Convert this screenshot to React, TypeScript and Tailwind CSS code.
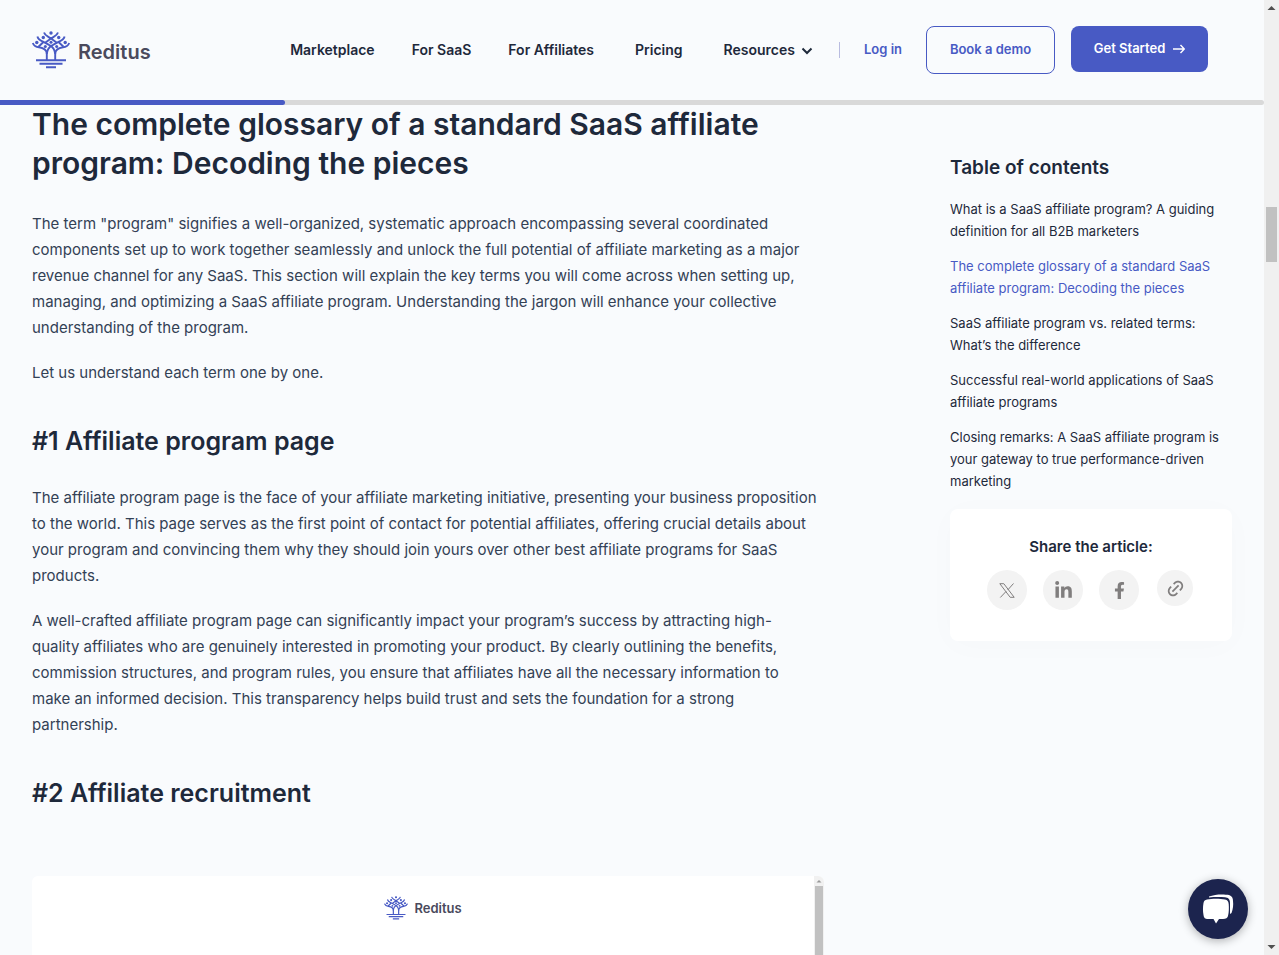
import type { ReactNode } from "react";
import { FaFacebookF, FaLinkedinIn } from "react-icons/fa";
import { RiLinkM } from "react-icons/ri";

function Tree({ className }: { className: string }) {
  return (
    <svg viewBox="0 0 38 38" className={className} fill="none" stroke="#485ac4" strokeWidth="1.9" aria-hidden="true">
      <path d="M.8 12C2 15.500 4 16 7 16.300C11 16.800 14.800 18.500 14.800 23V29" />
      <path d="M37.200 12C36 15.500 34 16 31 16.300C27 16.800 23.200 18.500 23.200 23V29" />
      <path d="M14.800 23C15 18 17.500 15.500 21 13.800L27 10.700C30 9.300 31.800 8.500 32.600 5.500" />
      <path d="M23.200 23C23 18 20.500 15.500 17 13.800L11 10.700C8 9.300 6.200 8.500 5.400 5.500" />
      <path d="M12 1.500C13 4.800 16 5.300 19 7.500C22 5.300 25 4.800 26 1.500M19 7.500 13.500 11.500M19 7.500 24.500 11.500" />
      <path d="M11.500 11 6.500 15.800M26.500 11 31.500 15.800" />
      <path d="M4 29.300H34M7.500 32.700H30.500M14 36.300H24" />
      <g fill="#485ac4" stroke="none">
        <circle cx="19" cy="2" r="1.7" />
        <circle cx="11.300" cy="6.500" r="1.7" />
        <circle cx="26.700" cy="6.500" r="1.7" />
        <circle cx="19" cy="11.300" r="1.5" />
        <circle cx="4.800" cy="11.500" r="1.7" />
        <circle cx="33.200" cy="11.500" r="1.7" />
        <circle cx="13.300" cy="15.600" r="1.5" />
        <circle cx="24.700" cy="15.600" r="1.5" />
      </g>
    </svg>
  );
}

const toc = [
  ["What is a SaaS affiliate program? A guiding", "definition for all B2B marketers"],
  ["The complete glossary of a standard SaaS", "affiliate program: Decoding the pieces"],
  ["SaaS affiliate program vs. related terms:", "What’s the difference"],
  ["Successful real-world applications of SaaS", "affiliate programs"],
  ["Closing remarks: A SaaS affiliate program is", "your gateway to true performance-driven", "marketing"],
];

function Lines({ lines }: { lines: string[] }) {
  return (
    <>
      {lines.map((line) => (
        <span key={line} className="block whitespace-nowrap">
          {line}
        </span>
      ))}
    </>
  );
}

function Share({ label, children }: { label: string; children: ReactNode }) {
  return (
    <a href="#share" aria-label={label} className="flex size-10 items-center justify-center rounded-full bg-[#f3f3f3] text-[#807e7e]">
      {children}
    </a>
  );
}

export default function App() {
  return (
    <div className="flex h-screen overflow-hidden bg-[#f9fbfd] font-['Inter',sans-serif] text-[#1e293b]">
      <div className="relative min-w-0 flex-1 overflow-hidden">
        <header className="flex h-[100px] items-center pr-14 pl-8">
          <a href="#home" className="flex items-center gap-2">
            <Tree className="size-[38px]" />
            <span className="mt-1 text-[20px] leading-7 font-semibold text-[#4a4a5c]">Reditus</span>
          </a>
          <nav className="mb-0.5 ml-auto flex items-center text-[14px] font-semibold whitespace-nowrap">
            <a href="#marketplace">Marketplace</a>
            <a href="#saas" className="ml-[37px]">For SaaS</a>
            <a href="#affiliates" className="ml-[37px]">For Affiliates</a>
            <a href="#pricing" className="ml-[41px]">Pricing</a>
            <button className="ml-[41px] flex items-center gap-1.5">
              Resources
              <svg viewBox="0 0 12 8" className="mt-1 h-2 w-3" fill="none" stroke="currentColor" strokeWidth="2" aria-hidden="true">
                <path d="M1.5 1.5 6 6l4.500-4.500" />
              </svg>
            </button>
          </nav>
          <div className="ml-[26px] flex items-center text-[13px] font-semibold whitespace-nowrap text-[#485ac4]">
            <span className="h-4 w-px bg-[#b9bce0]" />
            <a href="#login" className="ml-6">Log in</a>
            <a href="#demo" className="ml-6 flex h-12 w-[129px] items-center justify-center rounded-lg border border-[#485ac4]">
              Book a demo
            </a>
            <a href="#start" className="mb-0.5 ml-4 flex h-[46px] w-[137px] items-center justify-center gap-2 rounded-lg bg-[#485ac4] text-white">
              Get Started
              <svg viewBox="0 0 12 10" className="h-2.5 w-3" fill="none" stroke="currentColor" strokeWidth="1.4" aria-hidden="true">
                <path d="M0 5H11M7.500 1 11.300 5 7.500 9" />
              </svg>
            </a>
          </div>
        </header>
        <div className="h-[5px] rounded-r bg-[#d9d9d9]">
          <div className="h-full w-[285px] rounded-r bg-[#485ac4]" />
        </div>
        <div className="flex items-start justify-between px-8">
          <main className="w-[792px]">
            <h2 className="text-[30px] leading-[39px] font-semibold">
              <Lines lines={["The complete glossary of a standard SaaS affiliate", "program: Decoding the pieces"]} />
            </h2>
            <div className="mt-7 flex flex-col gap-[19px] text-[15px] leading-[26px] text-[#334155]">
              <p>
                <Lines
                  lines={[
                    'The term "program" signifies a well-organized, systematic approach encompassing several coordinated',
                    "components set up to work together seamlessly and unlock the full potential of affiliate marketing as a major",
                    "revenue channel for any SaaS. This section will explain the key terms you will come across when setting up,",
                    "managing, and optimizing a SaaS affiliate program. Understanding the jargon will enhance your collective",
                    "understanding of the program.",
                  ]}
                />
              </p>
              <p>Let us understand each term one by one.</p>
            </div>
            <h3 className="mt-10 text-[25px] leading-[31px] font-semibold">#1 Affiliate program page</h3>
            <div className="mt-7 flex flex-col gap-[19px] text-[15px] leading-[26px] text-[#334155]">
              <p>
                <Lines
                  lines={[
                    "The affiliate program page is the face of your affiliate marketing initiative, presenting your business proposition",
                    "to the world. This page serves as the first point of contact for potential affiliates, offering crucial details about",
                    "your program and convincing them why they should join yours over other best affiliate programs for SaaS",
                    "products.",
                  ]}
                />
              </p>
              <p>
                <Lines
                  lines={[
                    "A well-crafted affiliate program page can significantly impact your program’s success by attracting high-",
                    "quality affiliates who are genuinely interested in promoting your product. By clearly outlining the benefits,",
                    "commission structures, and program rules, you ensure that affiliates have all the necessary information to",
                    "make an informed decision. This transparency helps build trust and sets the foundation for a strong",
                    "partnership.",
                  ]}
                />
              </p>
            </div>
            <h3 className="mt-10 text-[25px] leading-[31px] font-semibold">#2 Affiliate recruitment</h3>
            <div className="mt-[67px] flex h-40 overflow-hidden rounded-md bg-white">
              <div className="flex flex-1 items-start justify-center pt-5">
                <div className="flex items-center gap-1.5">
                  <Tree className="size-6" />
                  <span className="text-[13px] leading-6 font-semibold text-[#4a4a5c]">Reditus</span>
                </div>
              </div>
              <div className="flex w-2.5 flex-col items-center bg-[#f1f1f1]">
                <svg viewBox="0 0 10 10" className="size-2.5" aria-hidden="true">
                  <path d="M2.500 6.500 5 4 7.500 6.500Z" fill="#999" />
                </svg>
                <div className="w-2 flex-1 bg-[#c1c1c1]" />
              </div>
            </div>
          </main>
          <aside className="mt-[49px] w-[282px]">
            <h4 className="text-[19px] leading-7 font-semibold">Table of contents</h4>
            <ul className="mt-4 flex flex-col gap-[13px] text-[13px] leading-[22px]">
              {toc.map((lines, index) => (
                <li key={lines[0]}>
                  <a href="#section" className={index === 1 ? "text-[#485ac4]" : "text-[#1e293b]"}>
                    <Lines lines={lines} />
                  </a>
                </li>
              ))}
            </ul>
            <div className="mt-[17px] h-[132px] rounded-lg bg-white pt-[26px] shadow-[0_4px_32px_rgba(0,0,0,0.02)]">
              <p className="text-center text-[15px] leading-6 font-semibold">Share the article:</p>
              <div className="mt-[11px] flex items-start justify-center gap-4">
                <Share label="Share on X">
                  <svg viewBox="0 0 16 15" className="h-[15px] w-4" fill="none" stroke="currentColor" aria-hidden="true">
                    <path d="M.8.700H4.800L15.200 14.300H11.200ZM14.500.500 8.700 7M7.200 8.300 1.300 14.500" />
                  </svg>
                </Share>
                <Share label="Share on LinkedIn">
                  <FaLinkedinIn size={19} />
                </Share>
                <Share label="Share on Facebook">
                  <FaFacebookF size={17} />
                </Share>
                <button aria-label="Copy link" className="mx-0.5 flex size-9 items-center justify-center rounded-full bg-[#f3f3f3] text-[#807e7e]">
                  <RiLinkM size={21} />
                </button>
              </div>
            </div>
          </aside>
        </div>
        <button
          aria-label="Open chat"
          className="absolute right-4 bottom-4 flex size-[60px] items-center justify-center rounded-full bg-[#1c244e] shadow-[0_2px_10px_rgba(0,0,0,0.3)]"
        >
          <svg viewBox="0 0 32 32" className="size-8" aria-hidden="true">
            <path d="M7 3.500C13 1 22 1 27 2C30 3 31 5 31 8C31.500 12 31 16 29.500 20L28 21V10C28 6 26 4.500 23 4.300C18 4 12 4 7 4.500Z" fill="#fff" />
            <path d="M5 6.500C10 5.500 18 5.500 23 6.500C25.500 7 26.500 8.500 26.700 11C27 15 27 19 26 23C25.500 25 24 26 21 26H17L14 30.500 11.500 26H6C3 26 2 25 1.500 22C.8 18 .8 14 1.500 10C2 7.700 3 6.900 5 6.500Z" fill="#fff" />
          </svg>
        </button>
      </div>
      <div className="flex w-[15px] shrink-0 flex-col items-center justify-between bg-[#f0f0f0]" aria-hidden="true">
        <svg viewBox="0 0 15 15" className="size-[15px]">
          <path d="M3.500 10 7.500 6l4 4Z" fill="#505050" />
        </svg>
        <div className="mt-[192px] mb-auto h-[55px] w-[11px] bg-[#c1c1c1]" />
        <svg viewBox="0 0 15 15" className="size-[15px]">
          <path d="M3.500 5h8l-4 4Z" fill="#505050" />
        </svg>
      </div>
    </div>
  );
}
